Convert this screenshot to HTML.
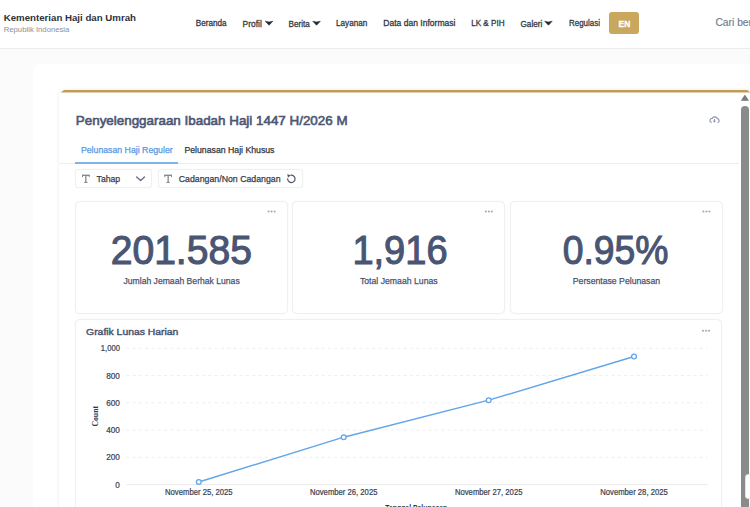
<!DOCTYPE html>
<html><head><meta charset="utf-8">
<style>
*{box-sizing:border-box;margin:0;padding:0}
html,body{width:750px;height:507px;overflow:hidden;background:#fbfbfb;font-family:"Liberation Sans",sans-serif}
.a{position:absolute}
#hdr{left:0;top:0;width:750px;height:49px;background:#fff;border-bottom:1px solid #ebebeb}
#card{left:32.8px;top:64.2px;width:780px;height:520px;background:#fff;border-radius:8px}
#panel{left:58.6px;top:90px;width:692px;height:460px;background:#fff;border-radius:5px;box-shadow:0 0 3.5px rgba(0,0,0,0.09)}
#gold{left:60.6px;top:89.5px;width:689.4px;height:3px;background:#c29d55;clip-path:polygon(0 100%,4px 0,calc(100% - 3px) 0,100% 100%)}
.box{background:#fff;border:1px solid #f0f0f0;border-radius:5px;box-shadow:0 0 1.5px rgba(0,0,0,0.06)}
#svg{position:absolute;left:0;top:0}
</style></head><body>
<div class="a" id="hdr"></div>
<div class="a" style="left:608.8px;top:11.8px;width:29.9px;height:22.4px;background:#c9a75c;border-radius:3px"></div>
<div class="a" id="card"></div>
<div class="a" id="panel"></div>
<div class="a" id="gold"></div>
<div class="a" style="left:58.5px;top:162.5px;width:680px;height:1px;background:#ededed"></div>
<div class="a" style="left:75px;top:162px;width:103px;height:2px;background:#7db2eb"></div>
<div class="a box" style="left:75.4px;top:169px;width:76.2px;height:19.4px;border-radius:3px"></div>
<div class="a box" style="left:157.5px;top:169px;width:145px;height:19.4px;border-radius:3px"></div>
<div class="a box" style="left:75px;top:200.7px;width:212.5px;height:113.2px"></div>
<div class="a box" style="left:292.2px;top:200.7px;width:212.8px;height:113.2px"></div>
<div class="a box" style="left:510px;top:200.7px;width:212.5px;height:113.2px"></div>
<div class="a box" style="left:75px;top:319px;width:647.3px;height:220px"></div>
<div class="a" style="left:740px;top:92.5px;width:10px;height:420px;background:#fff"></div>
<div class="a" style="left:741px;top:106px;width:7.6px;height:420px;background:#8b8b8b;border-radius:4px"></div>
<div class="a" style="left:745.3px;top:473.8px;width:10px;height:25.2px;background:#fff;border:1px solid #e0e0e0;border-radius:3px"></div>
<svg id="svg" width="750" height="507" viewBox="0 0 750 507" font-family="Liberation Sans, sans-serif">
<line x1="126.3" y1="484.6" x2="707.5" y2="484.6" stroke="#ebebeb" stroke-width="1"/><line x1="126.3" y1="457.3" x2="707.5" y2="457.3" stroke="#eeeeee" stroke-width="1" stroke-dasharray="3.2 3.1"/><line x1="126.3" y1="430.1" x2="707.5" y2="430.1" stroke="#eeeeee" stroke-width="1" stroke-dasharray="3.2 3.1"/><line x1="126.3" y1="402.8" x2="707.5" y2="402.8" stroke="#eeeeee" stroke-width="1" stroke-dasharray="3.2 3.1"/><line x1="126.3" y1="375.6" x2="707.5" y2="375.6" stroke="#eeeeee" stroke-width="1" stroke-dasharray="3.2 3.1"/><line x1="126.3" y1="348.3" x2="707.5" y2="348.3" stroke="#eeeeee" stroke-width="1" stroke-dasharray="3.2 3.1"/>
<polyline fill="none" stroke="#62a5e9" stroke-width="1.4" points="198.8,482 343.7,437.2 488.7,400.2 634,356.5"/>
<circle cx="198.8" cy="482" r="2.4" fill="#fff" stroke="#62a5e9" stroke-width="1.3"/><circle cx="343.7" cy="437.2" r="2.4" fill="#fff" stroke="#62a5e9" stroke-width="1.3"/><circle cx="488.7" cy="400.2" r="2.4" fill="#fff" stroke="#62a5e9" stroke-width="1.3"/><circle cx="634" cy="356.5" r="2.4" fill="#fff" stroke="#62a5e9" stroke-width="1.3"/>
<circle cx="268.6" cy="211.5" r="1" fill="#a0a4b4"/><circle cx="271.6" cy="211.5" r="1" fill="#a0a4b4"/><circle cx="274.6" cy="211.5" r="1" fill="#a0a4b4"/><circle cx="485.8" cy="211.5" r="1" fill="#a0a4b4"/><circle cx="488.8" cy="211.5" r="1" fill="#a0a4b4"/><circle cx="491.8" cy="211.5" r="1" fill="#a0a4b4"/><circle cx="703.4" cy="211.5" r="1" fill="#a0a4b4"/><circle cx="706.4" cy="211.5" r="1" fill="#a0a4b4"/><circle cx="709.4" cy="211.5" r="1" fill="#a0a4b4"/><circle cx="703" cy="330.7" r="1" fill="#a0a4b4"/><circle cx="706" cy="330.7" r="1" fill="#a0a4b4"/><circle cx="709" cy="330.7" r="1" fill="#a0a4b4"/>
<g stroke="#858891" fill="none"><path d="M82.0 175.3 H89.7" stroke-width="1.4"/><path d="M82.5 175 V177.2 M89.2 175 V177.2" stroke-width="1"/><path d="M85.85 175.5 V182.3" stroke-width="1.3"/><path d="M84.1 182.4 H87.6" stroke-width="1"/></g><g stroke="#858891" fill="none"><path d="M164.3 175.3 H172.0" stroke-width="1.4"/><path d="M164.8 175 V177.2 M171.5 175 V177.2" stroke-width="1"/><path d="M168.15 175.5 V182.3" stroke-width="1.3"/><path d="M166.4 182.4 H169.9" stroke-width="1"/></g><path d="M136.6 176.9 L140.6 180.6 L144.5 176.9" stroke="#6b7187" stroke-width="1.4" fill="none" stroke-linecap="round" stroke-linejoin="round"/><path d="M290.7 175.2 A3.7 3.7 0 1 1 287.7 178.3" stroke="#4e5568" stroke-width="1.2" fill="none"/><path d="M287.2 174.2 L291.0 175.3 L288.0 177.6 Z" fill="#4e5568"/><path d="M711.3 122.4 A2 2 0 0 1 712.1 118.5 A2.95 2.95 0 0 1 717.5 118.8 A1.85 1.85 0 0 1 717.9 122.4" stroke="#858ca4" stroke-width="1.05" fill="none" stroke-linecap="round"/><path d="M714.4 119 V121" stroke="#858ca4" stroke-width="1"/><path d="M712.9 120.7 H715.9 L714.4 122.7 Z" fill="#858ca4"/><path d="M741.7 100.3 L744.9 95.6 L748.1 100.3 Z" fill="#7c7c7c" stroke="#7c7c7c" stroke-width="1.1" stroke-linejoin="round"/>
<path d="M265.3 21.2 Q269.05 22.8 272.8 21.2 L269.05 25.2 Z" fill="#222a36" stroke="#222a36" stroke-width="0.6" stroke-linejoin="round"/><path d="M312.8 21.2 Q316.55 22.8 320.3 21.2 L316.55 25.2 Z" fill="#222a36" stroke="#222a36" stroke-width="0.6" stroke-linejoin="round"/><path d="M544.7 21.2 Q548.45 22.8 552.2 21.2 L548.45 25.2 Z" fill="#222a36" stroke="#222a36" stroke-width="0.6" stroke-linejoin="round"/>
<text x="3.7" y="21.4" font-size="9.5" font-weight="bold" fill="#2e323a" text-anchor="start" textLength="132.3" lengthAdjust="spacingAndGlyphs" >Kementerian Haji dan Umrah</text><text x="3.7" y="32.3" font-size="7.7" font-weight="normal" fill="#8b9099" text-anchor="start" textLength="65.7" lengthAdjust="spacingAndGlyphs" >Republik Indonesia</text><text x="195.7" y="26.3" font-size="8.8" font-weight="normal" fill="#343944" text-anchor="start" textLength="30.9" lengthAdjust="spacingAndGlyphs" stroke="#343944" stroke-width="0.3">Beranda</text><text x="242.6" y="27.0" font-size="8.8" font-weight="normal" fill="#343944" text-anchor="start" textLength="19.2" lengthAdjust="spacingAndGlyphs" stroke="#343944" stroke-width="0.3">Profil</text><text x="288.5" y="27.0" font-size="8.8" font-weight="normal" fill="#343944" text-anchor="start" textLength="21.3" lengthAdjust="spacingAndGlyphs" stroke="#343944" stroke-width="0.3">Berita</text><text x="336" y="26.3" font-size="8.8" font-weight="normal" fill="#343944" text-anchor="start" textLength="31.3" lengthAdjust="spacingAndGlyphs" stroke="#343944" stroke-width="0.3">Layanan</text><text x="383.3" y="26.3" font-size="8.8" font-weight="normal" fill="#343944" text-anchor="start" textLength="72.1" lengthAdjust="spacingAndGlyphs" stroke="#343944" stroke-width="0.3">Data dan Informasi</text><text x="471.2" y="26.3" font-size="8.8" font-weight="normal" fill="#343944" text-anchor="start" textLength="33.3" lengthAdjust="spacingAndGlyphs" stroke="#343944" stroke-width="0.3">LK &amp; PIH</text><text x="520.5" y="27.0" font-size="8.8" font-weight="normal" fill="#343944" text-anchor="start" textLength="21.8" lengthAdjust="spacingAndGlyphs" stroke="#343944" stroke-width="0.3">Galeri</text><text x="569" y="26.3" font-size="8.8" font-weight="normal" fill="#343944" text-anchor="start" textLength="31" lengthAdjust="spacingAndGlyphs" stroke="#343944" stroke-width="0.3">Regulasi</text><text x="624.4" y="26.7" font-size="9.8" font-weight="bold" fill="#ffffff" text-anchor="middle" textLength="11.6" lengthAdjust="spacingAndGlyphs" stroke="#fff" stroke-width="0.35">EN</text><text x="715.4" y="26.4" font-size="10.3" font-weight="normal" fill="#6e7b91" text-anchor="start" stroke="#6e7b91" stroke-width="0.15">Cari ber</text><text x="75.8" y="124.8" font-size="13.2" font-weight="normal" fill="#4b5672" text-anchor="start" textLength="271.8" lengthAdjust="spacingAndGlyphs" stroke="#4b5672" stroke-width="0.6">Penyelenggaraan Ibadah Haji 1447 H/2026 M</text><text x="80.9" y="152.8" font-size="8.8" font-weight="normal" fill="#5598e4" text-anchor="start" textLength="91.8" lengthAdjust="spacingAndGlyphs" stroke="#5598e4" stroke-width="0.25">Pelunasan Haji Reguler</text><text x="184.4" y="152.8" font-size="8.8" font-weight="normal" fill="#30343c" text-anchor="start" textLength="90.1" lengthAdjust="spacingAndGlyphs" stroke="#30343c" stroke-width="0.25">Pelunasan Haji Khusus</text><text x="96.6" y="182.2" font-size="9.4" font-weight="normal" fill="#363b4a" text-anchor="start" textLength="23.6" lengthAdjust="spacingAndGlyphs" stroke="#363b4a" stroke-width="0.25">Tahap</text><text x="178.8" y="182.2" font-size="9.4" font-weight="normal" fill="#363b4a" text-anchor="start" textLength="101.8" lengthAdjust="spacingAndGlyphs" stroke="#363b4a" stroke-width="0.25">Cadangan/Non Cadangan</text><text x="110.7" y="264.0" font-size="40" font-weight="normal" fill="#4a5573" text-anchor="start" textLength="141.2" lengthAdjust="spacingAndGlyphs" stroke="#4a5573" stroke-width="1.1">201.585</text><text x="352.4" y="264.0" font-size="40" font-weight="normal" fill="#4a5573" text-anchor="start" textLength="95.2" lengthAdjust="spacingAndGlyphs" stroke="#4a5573" stroke-width="1.1">1,916</text><text x="562.7" y="264.0" font-size="40" font-weight="normal" fill="#4a5573" text-anchor="start" textLength="105.8" lengthAdjust="spacingAndGlyphs" stroke="#4a5573" stroke-width="1.1">0.95%</text><text x="123.5" y="284.1" font-size="9.4" font-weight="normal" fill="#485170" text-anchor="start" textLength="116.2" lengthAdjust="spacingAndGlyphs" stroke="#485170" stroke-width="0.25">Jumlah Jemaah Berhak Lunas</text><text x="359.9" y="284.1" font-size="9.4" font-weight="normal" fill="#485170" text-anchor="start" textLength="77.8" lengthAdjust="spacingAndGlyphs" stroke="#485170" stroke-width="0.25">Total Jemaah Lunas</text><text x="572.8" y="284.1" font-size="9.4" font-weight="normal" fill="#485170" text-anchor="start" textLength="87.3" lengthAdjust="spacingAndGlyphs" stroke="#485170" stroke-width="0.25">Persentase Pelunasan</text><text x="86.1" y="335" font-size="9.8" font-weight="normal" fill="#4b5672" text-anchor="start" textLength="92.2" lengthAdjust="spacingAndGlyphs" stroke="#4b5672" stroke-width="0.45">Grafik Lunas Harian</text><text x="119.9" y="487.6" font-size="8.2" font-weight="normal" fill="#383e50" text-anchor="end" stroke="#383e50" stroke-width="0.2">0</text><text x="119.9" y="460.3" font-size="8.2" font-weight="normal" fill="#383e50" text-anchor="end" stroke="#383e50" stroke-width="0.2">200</text><text x="119.9" y="433.1" font-size="8.2" font-weight="normal" fill="#383e50" text-anchor="end" stroke="#383e50" stroke-width="0.2">400</text><text x="119.9" y="405.8" font-size="8.2" font-weight="normal" fill="#383e50" text-anchor="end" stroke="#383e50" stroke-width="0.2">600</text><text x="119.9" y="378.6" font-size="8.2" font-weight="normal" fill="#383e50" text-anchor="end" stroke="#383e50" stroke-width="0.2">800</text><text x="119.9" y="351.3" font-size="8.2" font-weight="normal" fill="#383e50" text-anchor="end" textLength="19.1" lengthAdjust="spacingAndGlyphs" stroke="#383e50" stroke-width="0.2">1,000</text><text x="198.8" y="495" font-size="8.2" font-weight="normal" fill="#383e50" text-anchor="middle" textLength="67.5" lengthAdjust="spacingAndGlyphs" stroke="#383e50" stroke-width="0.2">November 25, 2025</text><text x="343.7" y="495" font-size="8.2" font-weight="normal" fill="#383e50" text-anchor="middle" textLength="67.5" lengthAdjust="spacingAndGlyphs" stroke="#383e50" stroke-width="0.2">November 26, 2025</text><text x="488.7" y="495" font-size="8.2" font-weight="normal" fill="#383e50" text-anchor="middle" textLength="67.5" lengthAdjust="spacingAndGlyphs" stroke="#383e50" stroke-width="0.2">November 27, 2025</text><text x="634" y="495" font-size="8.2" font-weight="normal" fill="#383e50" text-anchor="middle" textLength="67.5" lengthAdjust="spacingAndGlyphs" stroke="#383e50" stroke-width="0.2">November 28, 2025</text><text x="0" y="0" font-family="Liberation Serif, serif" font-size="8.6" font-weight="bold" fill="#30343c" text-anchor="middle" textLength="20.6" lengthAdjust="spacingAndGlyphs" transform="translate(98.1 416.3) rotate(-90)">Count</text><text x="385.3" y="510.6" font-size="8.2" font-weight="bold" fill="#30343c" text-anchor="start" textLength="62" lengthAdjust="spacingAndGlyphs" >Tanggal Pelunasan</text>
</svg>
</body></html>
